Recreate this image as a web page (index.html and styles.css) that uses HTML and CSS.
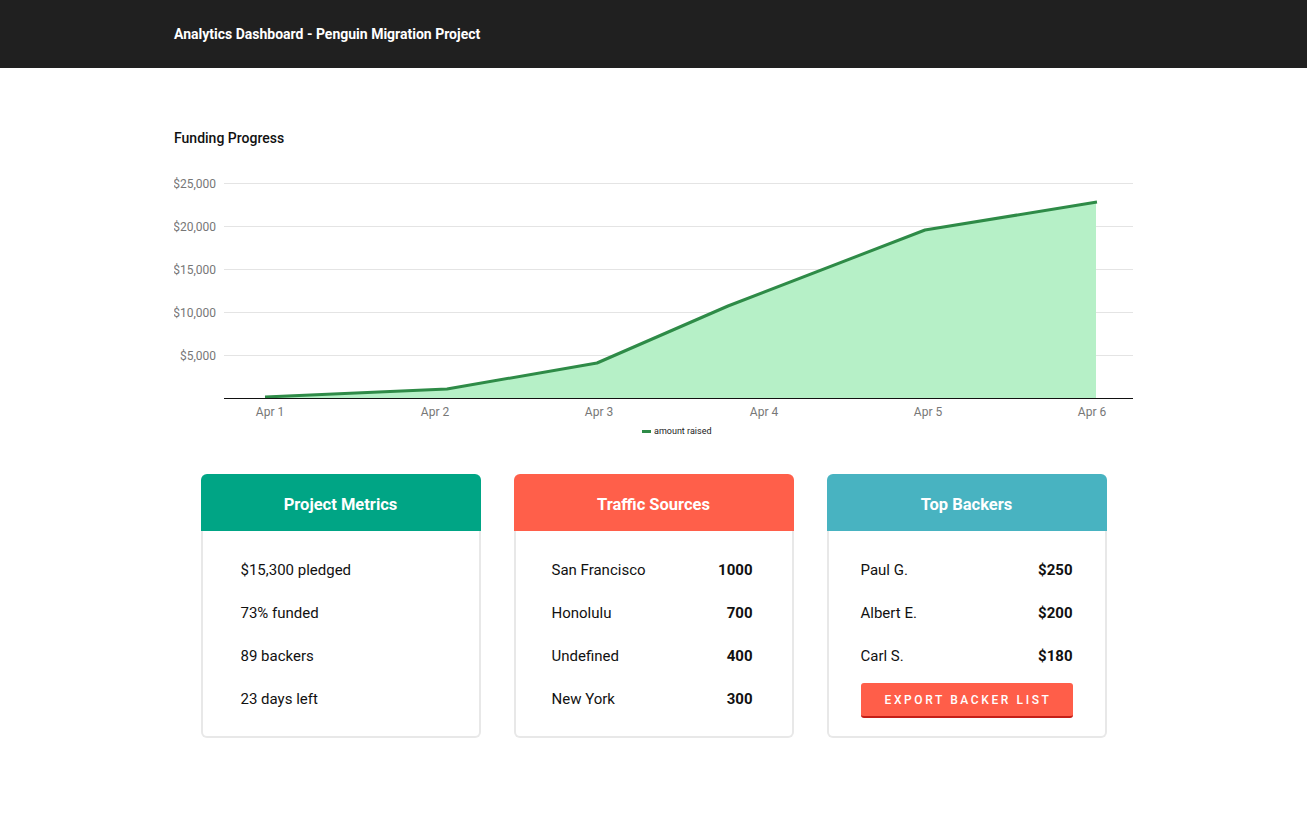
FILE: index.html
```html
<!DOCTYPE html>
<html>
<head>
<meta charset="utf-8">
<title>Analytics Dashboard</title>
<link rel="stylesheet" href="styles.css">
</head>
<body>
<header class="topbar">
  <div class="topbar-title">Analytics Dashboard - Penguin Migration Project</div>
</header>
<main class="main">
  <section class="chart-section">
    <h2 class="chart-title">Funding Progress</h2>
    <svg class="chart" width="959" height="270" viewBox="0 0 959 270">
      <g class="grid">
        <line x1="50" y1="13.5" x2="959" y2="13.5"/>
        <line x1="50" y1="56.5" x2="959" y2="56.5"/>
        <line x1="50" y1="99.5" x2="959" y2="99.5"/>
        <line x1="50" y1="142.5" x2="959" y2="142.5"/>
        <line x1="50" y1="185.5" x2="959" y2="185.5"/>
      </g>
      <g class="ylabels">
        <text x="42" y="17.5">$25,000</text>
        <text x="42" y="60.5">$20,000</text>
        <text x="42" y="103.5">$15,000</text>
        <text x="42" y="146.5">$10,000</text>
        <text x="42" y="189.5">$5,000</text>
      </g>
      <polygon class="area" points="91,227 273,219 423,193 554,136 751,60 922,32 922,228 91,228"/>
      <polyline class="line" points="91,227 273,219 423,193 554,136 751,60 923,32"/>
      <line class="axis" x1="50" y1="228.5" x2="959" y2="228.5"/>
      <g class="xlabels">
        <text x="96" y="245.5">Apr 1</text>
        <text x="261" y="245.5">Apr 2</text>
        <text x="425" y="245.5">Apr 3</text>
        <text x="590" y="245.5">Apr 4</text>
        <text x="754" y="245.5">Apr 5</text>
        <text x="918" y="245.5">Apr 6</text>
      </g>
      <line class="legend-line" x1="468" y1="261.5" x2="477" y2="261.5"/>
      <text class="legend-text" x="480" y="264">amount raised</text>
    </svg>
  </section>

  <section class="cards">
    <div class="card">
      <div class="card-head head-green">Project Metrics</div>
      <div class="card-body body-metrics">
        <div class="row">$15,300 pledged</div>
        <div class="row">73% funded</div>
        <div class="row">89 backers</div>
        <div class="row">23 days left</div>
      </div>
    </div>
    <div class="card">
      <div class="card-head head-coral">Traffic Sources</div>
      <div class="card-body body-traffic">
        <div class="row"><span>San Francisco</span><b>1000</b></div>
        <div class="row"><span>Honolulu</span><b>700</b></div>
        <div class="row"><span>Undefined</span><b>400</b></div>
        <div class="row"><span>New York</span><b>300</b></div>
      </div>
    </div>
    <div class="card">
      <div class="card-head head-blue">Top Backers</div>
      <div class="card-body body-backers">
        <div class="row"><span>Paul G.</span><b>$250</b></div>
        <div class="row"><span>Albert E.</span><b>$200</b></div>
        <div class="row"><span>Carl S.</span><b>$180</b></div>
        <button class="export-btn">EXPORT BACKER LIST</button>
      </div>
    </div>
  </section>
</main>
</body>
</html>
```

FILE: styles.css
```css
* { box-sizing: border-box; }
body {
  margin: 0;
  font-family: Roboto, "Liberation Sans", Arial, sans-serif;
  background: #ffffff;
  color: #111111;
}
.topbar {
  height: 68px;
  background: #202020;
  display: flex;
  align-items: center;
  padding-left: 174px;
}
.topbar-title {
  color: #ffffff;
  font-size: 14px;
  font-weight: 700;
}
.main {
  width: 959px;
  margin: 0 auto;
}
.chart-section {
  padding-top: 62px;
}
.chart-title {
  margin: 0;
  font-size: 14px;
  font-weight: 500;
  line-height: 17px;
  color: #111;
}
.chart {
  display: block;
  margin-top: 23px;
}
.grid line { stroke: #e4e4e4; stroke-width: 1; }
.ylabels text {
  font-size: 12px;
  fill: #777;
  text-anchor: end;
  font-family: Roboto, "Liberation Sans", sans-serif;
}
.xlabels text {
  font-size: 12px;
  fill: #777;
  text-anchor: middle;
  font-family: Roboto, "Liberation Sans", sans-serif;
}
.area { fill: #b6f0c7; }
.line { fill: none; stroke: #2e8b47; stroke-width: 3; stroke-linejoin: round; }
.axis { stroke: #111; stroke-width: 1; }
.legend-line { stroke: #2e8b47; stroke-width: 3; }
.legend-text { font-size: 9px; fill: #222; font-family: Roboto, "Liberation Sans", sans-serif; }

.cards {
  display: flex;
  justify-content: center;
  gap: 33px;
  margin-top: 34px;
}
.card {
  width: 280px;
  height: 264px;
  display: flex;
  flex-direction: column;
}
.card-head {
  height: 57px;
  border-radius: 6px 6px 0 0;
  color: #fff;
  font-size: 16.5px;
  font-weight: 700;
  display: flex;
  align-items: center;
  justify-content: center;
  padding-top: 3px;
}
.head-green { background: #00a585; }
.head-coral { background: #ff5f4a; }
.head-blue { background: #48b3c1; }
.card-body {
  flex: 1;
  border: 2px solid #e8e8e8;
  border-top: none;
  border-radius: 0 0 6px 6px;
  padding-top: 17px;
  font-size: 15px;
}
.row {
  height: 43px;
  display: flex;
  align-items: center;
  justify-content: space-between;
}
.row b { font-weight: 700; }
.body-metrics { padding-left: 38px; }
.body-traffic { padding-left: 36px; padding-right: 39px; }
.body-backers { padding-left: 32px; padding-right: 32px; }
.export-btn {
  display: block;
  width: 100%;
  height: 35px;
  margin-top: 6px;
  background: #ff5e49;
  border: none;
  border-bottom: 2px solid #c41f17;
  border-radius: 3px;
  color: #fff;
  font-family: Roboto, "Liberation Sans", sans-serif;
  font-size: 12px;
  font-weight: 500;
  letter-spacing: 2.6px;
  padding: 0;
  padding-left: 3px;
}
```
